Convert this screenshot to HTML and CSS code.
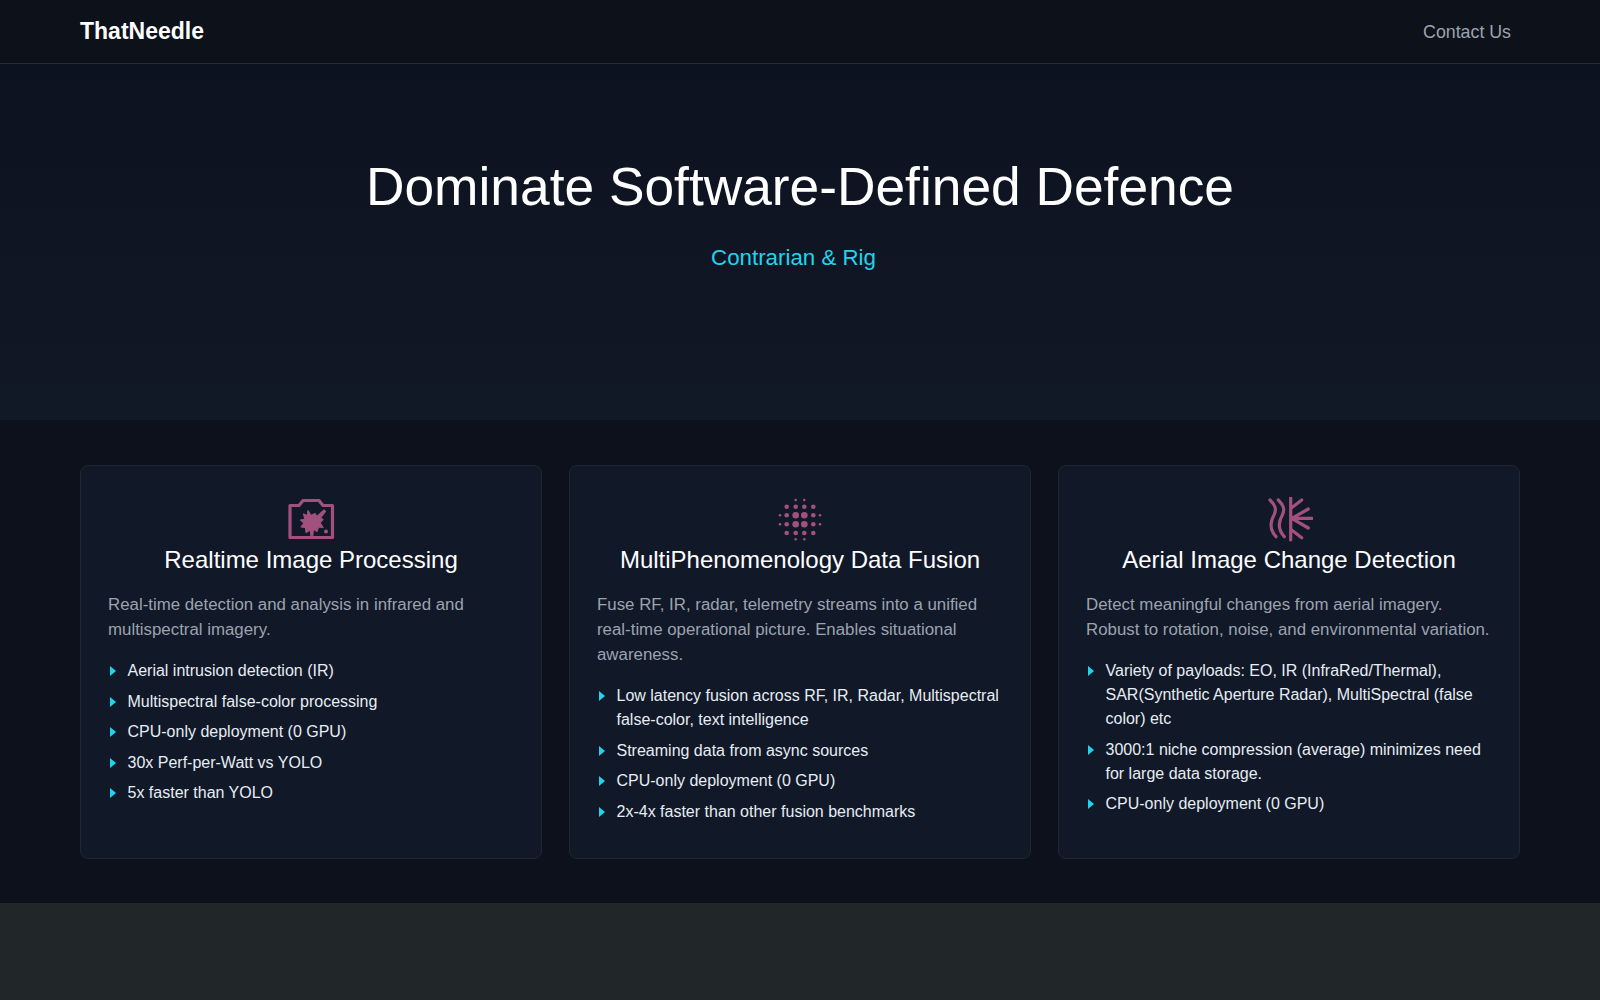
FILE: index.html
```html
<!doctype html>
<html lang="en">
  <head>
    <meta charset="UTF-8" />
    <meta name="viewport" content="width=device-width, initial-scale=1.0" />
    <title>ThatNeedle</title>
    <link rel="stylesheet" href="styles.css">
  </head>
  <body>
    <header class="topbar">
      <a class="logo" href="#">ThatNeedle</a>
      <a class="contact" href="#">Contact Us</a>
    </header>
    <section class="hero">
      <h1>Dominate Software-Defined Defence</h1>
      <p class="tagline">Contrarian &amp; Rig</p>
    </section>
    <section class="features">
      <div class="card">
        <div class="icon">
          <svg viewBox="0 0 48 46" width="48" height="46">
            <path class="line" d="M3 8.500H12L16 3.500H32L36 8.500H45.500V40.500H3Z" />
            <path class="splat" d="M21 13.500L24 18.500L28 16.500L30 19.500L37 13L38.500 14.500L33.500 21L36 22.500L33 25.500L36 30.500L31.500 30L30 34.500L26.500 32L25.700 39.500H24L23.500 33L19 35.500L18.500 30.500L14 30L17 26L13.500 23L18 22L16.500 17L20.500 18.500Z" />
            <circle class="fill" cx="39" cy="34.500" r="2" />
          </svg>
        </div>
        <h3>Realtime Image Processing</h3>
        <p class="desc">Real-time detection and analysis in infrared and multispectral imagery.</p>
        <ul>
          <li>Aerial intrusion detection (IR)</li>
          <li>Multispectral false-color processing</li>
          <li>CPU-only deployment (0 GPU)</li>
          <li>30x Perf-per-Watt vs YOLO</li>
          <li>5x faster than YOLO</li>
        </ul>
      </div>
      <div class="card">
        <div class="icon">
          <svg viewBox="0 0 48 46" width="48" height="46">
            <g class="fill">
              <circle cx="19.700" cy="3" r="1.300" /><circle cx="28.300" cy="3" r="1.300" />
              <circle cx="10.700" cy="9.700" r="2.300" /><circle cx="19.700" cy="9.700" r="2.300" /><circle cx="28.300" cy="9.700" r="2.300" /><circle cx="37.300" cy="9.700" r="2.300" />
              <circle cx="4" cy="18.300" r="1.300" /><circle cx="10.700" cy="18.300" r="2.300" /><circle cx="19.700" cy="18.300" r="3.300" /><circle cx="28.300" cy="18.300" r="3.300" /><circle cx="37.300" cy="18.300" r="2.300" /><circle cx="44" cy="18.300" r="1.300" />
              <circle cx="4" cy="27.300" r="1.300" /><circle cx="10.700" cy="27.300" r="2.300" /><circle cx="19.700" cy="27.300" r="3.300" /><circle cx="28.300" cy="27.300" r="3.300" /><circle cx="37.300" cy="27.300" r="2.300" /><circle cx="44" cy="27.300" r="1.300" />
              <circle cx="10.700" cy="36" r="2.300" /><circle cx="19.700" cy="36" r="2.300" /><circle cx="28.300" cy="36" r="2.300" /><circle cx="37.300" cy="36" r="2.300" />
              <circle cx="19.700" cy="42.300" r="1.300" /><circle cx="28.300" cy="42.300" r="1.300" />
            </g>
          </svg>
        </div>
        <h3>MultiPhenomenology Data Fusion</h3>
        <p class="desc">Fuse RF, IR, radar, telemetry streams into a unified real-time operational picture. Enables situational awareness.</p>
        <ul>
          <li>Low latency fusion across RF, IR, Radar, Multispectral false-color, text intelligence</li>
          <li>Streaming data from async sources</li>
          <li>CPU-only deployment (0 GPU)</li>
          <li>2x-4x faster than other fusion benchmarks</li>
        </ul>
      </div>
      <div class="card">
        <div class="icon">
          <svg viewBox="0 0 48 46" width="48" height="46">
            <path class="line" d="M5 3C10 8 12 12 9 18C5 25 4 32 11 39.700" />
            <path class="line" d="M13.300 3C18.300 8 20.300 12 17.300 18C13.300 25 12.300 32 19.300 39.700" />
            <path class="line" d="M25.700 1V43M26.700 10.700L36.700 3M26.700 21.300L43.300 12M26.700 21.300H47M26.700 21.300L43.300 31M26.700 33L36.700 40.700" />
          </svg>
        </div>
        <h3>Aerial Image Change Detection</h3>
        <p class="desc">Detect meaningful changes from aerial imagery. Robust to rotation, noise, and environmental variation.</p>
        <ul>
          <li>Variety of payloads: EO, IR (InfraRed/Thermal), SAR(Synthetic Aperture Radar), MultiSpectral (false color) etc</li>
          <li>3000:1 niche compression (average) minimizes need for large data storage.</li>
          <li>CPU-only deployment (0 GPU)</li>
        </ul>
      </div>
    </section>
    <footer class="foot"></footer>
  </body>
</html>
```

FILE: styles.css
```css
* {
  box-sizing: border-box;
}
body {
  margin: 0;
  background: #0d111b;
  color: #e6edf3;
  font-family: "Liberation Sans", Arial, sans-serif;
  height: 1000px;
  overflow: hidden;
}
.topbar {
  height: 64px;
  display: flex;
  justify-content: space-between;
  align-items: center;
  padding: 0 89px 0 80px;
  background: #0d111a;
  border-bottom: 1px solid #262b35;
}
.logo {
  color: #fff;
  font-size: 23px;
  font-weight: 700;
  text-decoration: none;
}
.contact {
  color: #9ca3af;
  font-size: 17.800px;
  text-decoration: none;
  margin-top: 2px;
}
.hero {
  height: 356px;
  padding-top: 92px;
  text-align: center;
  background: linear-gradient(180deg, #0d1220 0%, #111826 100%);
}
.hero h1 {
  margin: 0;
  color: #fff;
  font-size: 53.300px;
  line-height: 62px;
  font-weight: 400;
}
.tagline {
  margin: 26px 13px 0 0;
  color: #22d3ee;
  font-size: 22.300px;
  line-height: 28px;
}
.features {
  display: grid;
  grid-template-columns: repeat(3, 462px);
  gap: 27px;
  height: 483px;
  padding: 45px 80px;
}
.card {
  height: 394px;
  padding: 31px 27px;
  background: #111828;
  border: 1px solid #1f2733;
  border-radius: 8px;
}
.icon {
  height: 46px;
  display: flex;
  justify-content: center;
  align-items: center;
}
.line {
  fill: none;
  stroke: #a2517f;
  stroke-width: 3.200;
  stroke-linecap: round;
  stroke-linejoin: round;
}
.fill {
  fill: #a2517f;
}
.splat {
  fill: #a2517f;
  stroke: #a2517f;
  stroke-width: 1.200;
  stroke-linejoin: round;
}
.card h3 {
  margin: 2px 0 0;
  color: #fff;
  text-align: center;
  font-size: 24px;
  line-height: 30px;
  font-weight: 400;
}
.desc {
  margin: 17px 0 0;
  color: #9ca3af;
  font-size: 16.850px;
  line-height: 25px;
}
.card ul {
  list-style: none;
  margin: 17px 0 0;
  padding: 0;
}
.card li {
  position: relative;
  margin-bottom: 6.500px;
  padding-left: 19.500px;
  color: #e6edf3;
  font-size: 16px;
  line-height: 24px;
}
.card li::before {
  content: "";
  position: absolute;
  left: 2px;
  top: 7px;
  border-left: 6px solid #22d3ee;
  border-top: 5px solid transparent;
  border-bottom: 5px solid transparent;
}
.foot {
  height: 97px;
  background: #212629;
}
```
